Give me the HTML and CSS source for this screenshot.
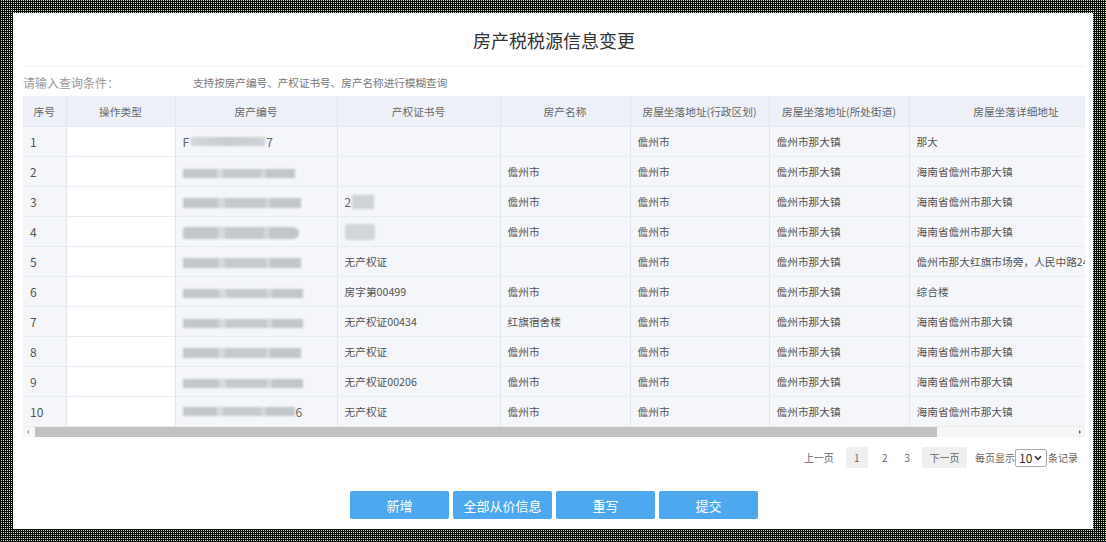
FILE: index.html
```html
<!DOCTYPE html>
<html lang="zh-CN">
<head>
<meta charset="utf-8">
<title>房产税税源信息变更</title>
<link rel="stylesheet" href="styles.css">
</head>
<body>
<div class="panel">
  <div class="title-bar"><h1 class="title">房产税税源信息变更</h1></div>
  <div class="query">
    <span class="query-label">请输入查询条件：</span>
    <span class="query-hint">支持按房产编号、产权证书号、房产名称进行模糊查询</span>
  </div>
  <div class="grid-wrap">
    <div class="grid-clip">
      <table class="grid">
        <colgroup>
          <col class="c1"><col class="c2"><col class="c3"><col class="c4"><col class="c5"><col class="c6"><col class="c7"><col class="c8">
        </colgroup>
        <thead>
          <tr><th>序号</th><th>操作类型</th><th>房产编号</th><th>产权证书号</th><th>房产名称</th><th>房屋坐落地址(行政区划)</th><th>房屋坐落地址(所处街道)</th><th>房屋坐落详细地址</th></tr>
        </thead>
        <tbody>
          <tr><td class="num">1</td><td class="op"></td><td><span class="mask-row">F<span class="blur b-a"></span>7</span></td><td></td><td></td><td>儋州市</td><td>儋州市那大镇</td><td>那大</td></tr>
          <tr><td class="num">2</td><td class="op"></td><td><span class="blur b-b"></span></td><td></td><td>儋州市</td><td>儋州市</td><td>儋州市那大镇</td><td>海南省儋州市那大镇</td></tr>
          <tr><td class="num">3</td><td class="op"></td><td><span class="blur b-c"></span></td><td><span class="mask-row">2<span class="blur b-s"></span></span></td><td>儋州市</td><td>儋州市</td><td>儋州市那大镇</td><td>海南省儋州市那大镇</td></tr>
          <tr><td class="num">4</td><td class="op"></td><td><span class="blur b-d"></span></td><td><span class="blur b-t"></span></td><td>儋州市</td><td>儋州市</td><td>儋州市那大镇</td><td>海南省儋州市那大镇</td></tr>
          <tr><td class="num">5</td><td class="op"></td><td><span class="blur b-c"></span></td><td>无产权证</td><td></td><td>儋州市</td><td>儋州市那大镇</td><td class="nowrap">儋州市那大红旗市场旁，人民中路24号</td></tr>
          <tr><td class="num">6</td><td class="op"></td><td><span class="blur b-e"></span></td><td>房字第00499</td><td>儋州市</td><td>儋州市</td><td>儋州市那大镇</td><td>综合楼</td></tr>
          <tr><td class="num">7</td><td class="op"></td><td><span class="blur b-e"></span></td><td>无产权证00434</td><td>红旗宿舍楼</td><td>儋州市</td><td>儋州市那大镇</td><td>海南省儋州市那大镇</td></tr>
          <tr><td class="num">8</td><td class="op"></td><td><span class="blur b-c"></span></td><td>无产权证</td><td>儋州市</td><td>儋州市</td><td>儋州市那大镇</td><td>海南省儋州市那大镇</td></tr>
          <tr><td class="num">9</td><td class="op"></td><td><span class="blur b-e"></span></td><td>无产权证00206</td><td>儋州市</td><td>儋州市</td><td>儋州市那大镇</td><td>海南省儋州市那大镇</td></tr>
          <tr><td class="num">10</td><td class="op"></td><td><span class="mask-row"><span class="blur b-f"></span>6</span></td><td>无产权证</td><td>儋州市</td><td>儋州市</td><td>儋州市那大镇</td><td>海南省儋州市那大镇</td></tr>
        </tbody>
      </table>
    </div>
    <div class="hscroll">
      <span class="arrow arrow-left"></span>
      <div class="track"><div class="thumb"></div></div>
      <span class="arrow arrow-right"></span>
    </div>
  </div>
  <div class="pager">
    <span class="pg-text">上一页</span>
    <span class="pg-box pg-cur">1</span>
    <span class="pg-num">2</span>
    <span class="pg-num">3</span>
    <span class="pg-box pg-next">下一页</span>
    <span class="pg-text pg-per">每页显示</span>
    <span class="pg-select">10<svg class="chev" viewBox="0 0 8 6" width="8" height="6"><path d="M1 1.2 L4 4.4 L7 1.2" fill="none" stroke="#333" stroke-width="1.6"/></svg></span>
    <span class="pg-text">条记录</span>
  </div>
  <div class="actions">
    <button class="btn">新增</button>
    <button class="btn">全部从价信息</button>
    <button class="btn">重写</button>
    <button class="btn">提交</button>
  </div>
</div>
</body>
</html>
```

FILE: styles.css
```css
html, body {
  margin: 0;
  padding: 0;
}
body {
  width: 1106px;
  height: 542px;
  box-sizing: border-box;
  padding: 13px 13px 13px 13px;
  background: repeating-conic-gradient(#c6ec9c 0 25%, #050a02 0 100%) 0 0 / 2px 2px;
  font-family: "Noto Sans CJK SC", "Noto Sans", sans-serif;
  color: #555;
  overflow: hidden;
}
.panel {
  width: 1080px;
  height: 516px;
  background: #fff;
  box-sizing: border-box;
  padding: 0 8px 0 10px;
  display: flex;
  flex-direction: column;
}
.title-bar {
  height: 53px;
  border-bottom: 1px solid #f0f0f0;
  display: flex;
  align-items: center;
  justify-content: center;
}
.title {
  margin: 0;
  font-size: 18px;
  font-weight: normal;
  color: #333;
  line-height: 24px;
}
.query {
  height: 30px;
  display: flex;
  align-items: center;
  padding-top: 1px;
  box-sizing: border-box;
}
.query-label {
  font-size: 12px;
  color: #999;
  width: 170px;
}
.query-hint {
  font-size: 10.6px;
  color: #777;
}
.grid-wrap {
  width: 1062px;
  margin-top: -1px;
}
.grid-clip {
  width: 1062px;
  overflow: hidden;
}
.grid {
  width: 1100px;
  table-layout: fixed;
  border-collapse: collapse;
  font-size: 10.7px;
}
.c1 { width: 43px; }
.c2 { width: 109px; }
.c3 { width: 162px; }
.c4 { width: 163px; }
.c5 { width: 130px; }
.c6 { width: 139px; }
.c7 { width: 140px; }
.c8 { width: 214px; }
.grid th {
  height: 30px;
  padding: 0;
  background: #edf1f7;
  color: #666;
  font-weight: normal;
  text-align: center;
  border-right: 1px solid #dfe5ee;
  border-bottom: 1px solid #e6ebf2;
  white-space: nowrap;
}
.grid td {
  height: 30px;
  padding: 0 0 0 7px;
  background: #f4f6fa;
  color: #555;
  border-right: 1px solid #e1e6ee;
  border-bottom: 1px solid #e8ecf2;
  white-space: nowrap;
  overflow: hidden;
  box-sizing: border-box;
}
.grid td.op {
  background: #fff;
}
.grid td.num {
  font-size: 12px;
  color: #555;
}
.mask-row {
  display: inline-flex;
  align-items: center;
  font-size: 12px;
  color: #666;
}
.blur {
  display: inline-block;
  vertical-align: middle;
  height: 9px;
  background: linear-gradient(90deg, #c3c6cb 0 30%, #d6d9dd 30% 36%, #c6c9ce 36% 70%, #d4d7db 70% 74%, #c2c5ca 74%);
  filter: blur(1.2px);
}
.b-a { width: 74px; margin: 0 1px 0 2px; background: linear-gradient(90deg, #d4d7dc, #c8cbd0 50%, #d0d3d7); }
.b-b { width: 112px; }
.b-c { width: 118px; height: 10px; }
.b-d { width: 116px; height: 12px; border-radius: 2px 6px 6px 2px; }
.b-e { width: 120px; }
.b-f { width: 112px; margin-right: 1px; }
.b-s { width: 22px; height: 14px; margin-left: 1px; background: #cfd2d6; }
.b-t { width: 30px; height: 16px; background: #d2d5d9; border-radius: 4px; }
.nowrap { white-space: nowrap; }
.hscroll {
  height: 10px;
  display: flex;
  align-items: center;
  background: #f6f6f6;
}
.arrow {
  width: 12px;
  height: 10px;
  position: relative;
  flex: none;
}
.arrow::after {
  content: "";
  position: absolute;
  top: 3px;
  border-top: 2px solid transparent;
  border-bottom: 2px solid transparent;
}
.arrow-left::after {
  left: 4px;
  border-right: 2px solid #999;
}
.arrow-right::after {
  right: 4px;
  border-left: 2px solid #555;
}
.track {
  flex: 1;
  height: 10px;
  display: flex;
}
.thumb {
  width: 902px;
  height: 10px;
  background: #c2c2c2;
}
.pager {
  display: flex;
  align-items: center;
  justify-content: flex-end;
  height: 21px;
  margin-top: 10px;
  padding-right: 7px;
  font-size: 10px;
  color: #666;
}
.pg-text {
  margin-right: 12px;
}
.pg-box {
  height: 21px;
  display: inline-flex;
  align-items: center;
  justify-content: center;
  background: #efefef;
  border-radius: 1px;
  box-sizing: border-box;
}
.pg-cur {
  width: 22px;
  margin-right: 14px;
}
.pg-num {
  margin-right: 17px;
}
.pg-next {
  width: 45px;
  margin-left: -5px;
  margin-right: 8px;
}
.pg-per {
  margin-right: 0;
}
.pg-select {
  height: 18px;
  width: 32px;
  box-sizing: border-box;
  border: 1px solid #a9a9a9;
  border-radius: 2px;
  display: inline-flex;
  align-items: center;
  padding-left: 3px;
  margin-right: 1px;
  font-size: 12px;
  color: #333;
  gap: 2px;
}
.pg-select + .pg-text {
  margin-right: 0;
}
.chev {
  display: block;
}
.actions {
  display: flex;
  justify-content: center;
  gap: 4px;
  margin-top: 23px;
}
.btn {
  width: 99px;
  height: 28px;
  border: none;
  border-radius: 2px;
  background: #4ea8f0;
  color: #fff;
  font-family: "Noto Sans CJK SC", sans-serif;
  font-size: 13px;
  padding: 0;
}
```
